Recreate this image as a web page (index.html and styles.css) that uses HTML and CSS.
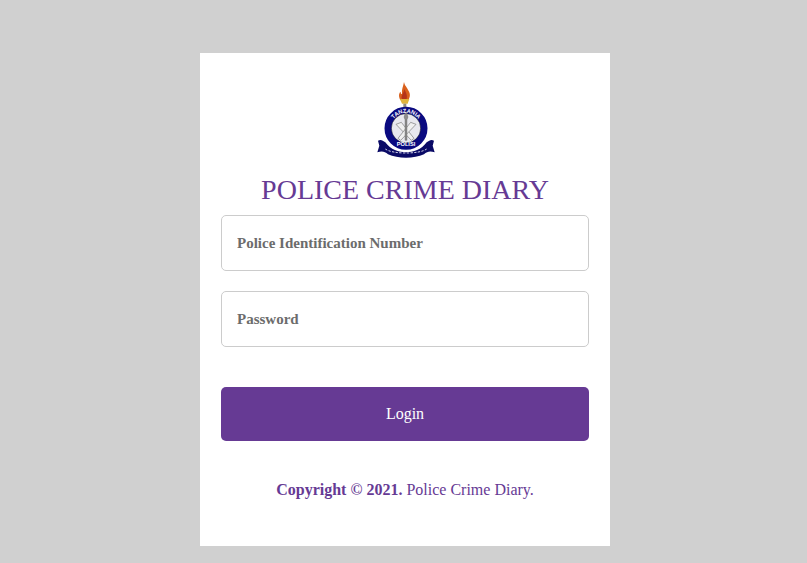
FILE: index.html
```html
<!DOCTYPE html>
<html lang="en">
<head>
<meta charset="utf-8">
<title>Police Crime Diary</title>
<link rel="stylesheet" href="styles.css">
</head>
<body>
<main class="card">
  <div class="logo">
    <svg width="60" height="80" viewBox="33 18 180 240" aria-label="Tanzania Police emblem">
      <path d="M120 21C123 34 129 36 134 48C140 58 138 68 132 76H110C103 66 104 54 110 50C110 56 112 58 114 56C112 44 118 34 120 21Z" fill="#d9601c"/>
      <path d="M121 42C125 52 131 58 128 72H114C110 62 119 56 121 42Z" fill="#b5341b"/>
      <path d="M108 72H136L131 86H114Z" fill="#e0b33c"/>
      <path d="M118 86H127V98H118Z" fill="#8f8a7a"/>
      <circle cx="126" cy="160" r="54" fill="#e8e8ee" stroke="#0a0a80" stroke-width="21"/>
      <circle cx="126" cy="160" r="44" fill="none" stroke="#222" stroke-width="1.5"/>
      <path d="M96 148L112 142L150 190L142 196Z" fill="#f0f0f0" stroke="#777" stroke-width="2"/>
      <path d="M156 148L140 142L102 190L110 196Z" fill="#f0f0f0" stroke="#777" stroke-width="2"/>
      <path d="M126 108L132 126L129 134V196H123V134L120 126Z" fill="#8d8d8d" stroke="#555" stroke-width="1"/>
      <path d="M42 197C50 192 56 196 64 202C80 224 104 232 126 232C148 232 172 224 188 202C196 196 202 192 210 197L206 212L212 232C200 228 190 228 180 238C150 252 102 252 72 238C62 228 52 228 40 232L46 212Z" fill="#0a0a66"/>
      <path d="M64 222C84 238 168 238 188 222" fill="none" stroke="#cfcfe8" stroke-width="3" stroke-dasharray="7 4"/>
      <defs>
        <path id="logoArc" d="M82 146A46 46 0 0 1 170 146"/>
      </defs>
      <text class="logo-text"><textPath href="#logoArc" startOffset="50%" text-anchor="middle">TANZANIA</textPath></text>
      <text class="logo-text" x="126" y="212" text-anchor="middle">POLISI</text>
    </svg>
  </div>
  <h1 class="title">POLICE CRIME DIARY</h1>
  <form class="form">
    <input class="field" type="text" placeholder="Police Identification Number">
    <input class="field" type="password" placeholder="Password">
    <button class="submit" type="button">Login</button>
  </form>
  <p class="copyright"><strong>Copyright © 2021.</strong> Police Crime Diary.</p>
</main>
</body>
</html>
```
FILE: styles.css
```css
* {
  box-sizing: border-box;
}

html,
body {
  margin: 0;
  height: 100%;
}

body {
  background: #d0d0d0;
  font-family: "Liberation Serif", "Times New Roman", serif;
  padding-top: 53px;
}

.card {
  width: 410px;
  height: 493px;
  margin-left: 200px;
  padding: 28px 21px 0;
  background: #fff;
}

.logo {
  display: flex;
  justify-content: center;
  height: 80px;
}

.logo-text {
  font-family: "Liberation Sans", Arial, sans-serif;
  font-size: 17px;
  font-weight: 700;
  fill: #fff;
}

.title {
  margin: 13px 0 0;
  color: #663a94;
  font-size: 28px;
  font-weight: 400;
  line-height: 32px;
  text-align: center;
}

.form {
  display: flex;
  flex-direction: column;
  margin-top: 9px;
}

.field {
  height: 56px;
  margin-bottom: 20px;
  padding: 0 15px;
  border: 1px solid #ccc;
  border-radius: 5px;
  background: #fff;
  color: #333;
  font-family: inherit;
  font-size: 15px;
  font-weight: 700;
  outline: none;
}

.field::placeholder {
  color: #6c6c6c;
  opacity: 1;
}

.submit {
  height: 54px;
  margin-top: 20px;
  border: 0;
  border-radius: 5px;
  background: #663a94;
  color: #fff;
  font-family: inherit;
  font-size: 16px;
}

.copyright {
  margin: 40px 0 0;
  color: #663a94;
  font-size: 16px;
  line-height: 18px;
  text-align: center;
}
```
